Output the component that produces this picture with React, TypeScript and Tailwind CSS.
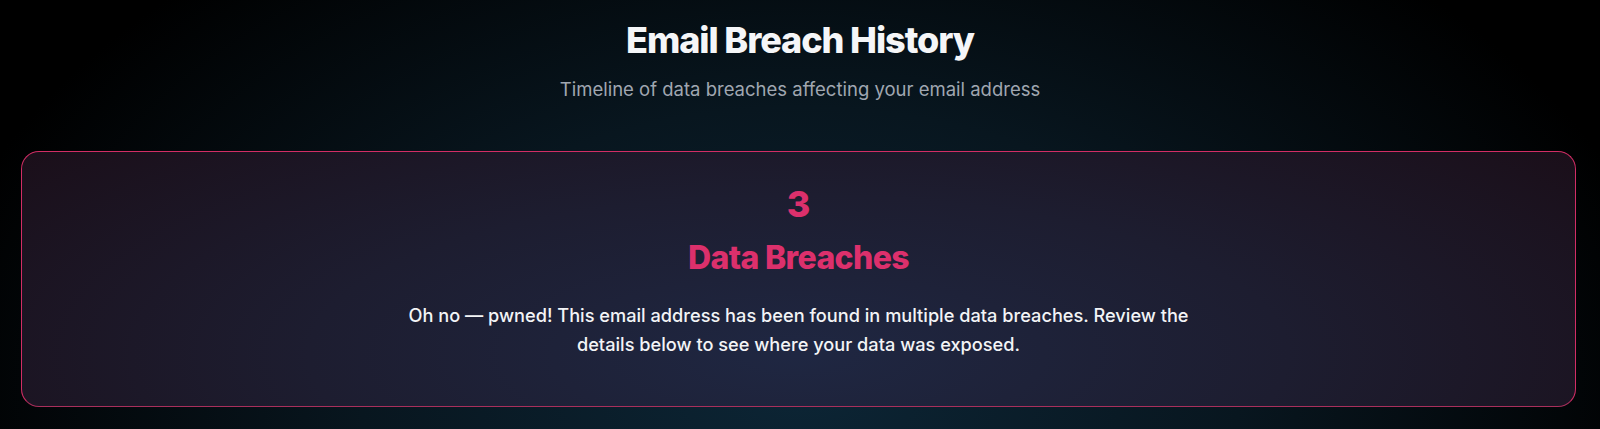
export default function App() {
  return (
    <div
      className="w-[1600px] h-[429px] overflow-hidden flex flex-col items-center bg-[radial-gradient(ellipse_55%_130%_at_50%_90%,#0c2535_0%,#08161f_50%,#000000_100%)]"
      style={{ fontFamily: "Inter, 'Liberation Sans', sans-serif" }}
    >
      <h1 className="mt-[18px] text-[36px] leading-[44px] font-extrabold tracking-[-0.03em] text-[#f5f6f8]">
        Email Breach History
      </h1>
      <p className="mt-[13px] text-[18.5px] leading-[28px] text-[#a0a7b1]">
        Timeline of data breaches affecting your email address
      </p>
      <div className="mt-[48px] self-stretch ml-[21px] mr-[24px] h-[256px] rounded-[18px] border border-[#d22d65] border-b-[#a92f5c] flex flex-col items-center bg-[radial-gradient(ellipse_70%_140%_at_50%_80%,#1f2742_0%,#1d1d30_45%,#1a0c15_100%)]">
        <div className="mt-[32px] text-[36px] leading-[40px] font-extrabold text-[#dc306c]">3</div>
        <div className="mt-[16px] text-[32px] leading-[36px] font-extrabold tracking-[-0.02em] text-[#dc306c]">
          Data Breaches
        </div>
        <p className="mt-[25px] max-w-[800px] text-center text-[18.2px] leading-[28.5px] font-medium text-[#f3f4f6]">
          Oh no — pwned! This email address has been found in multiple data breaches. Review the details below to see where your data was exposed.
        </p>
      </div>
    </div>
  );
}
